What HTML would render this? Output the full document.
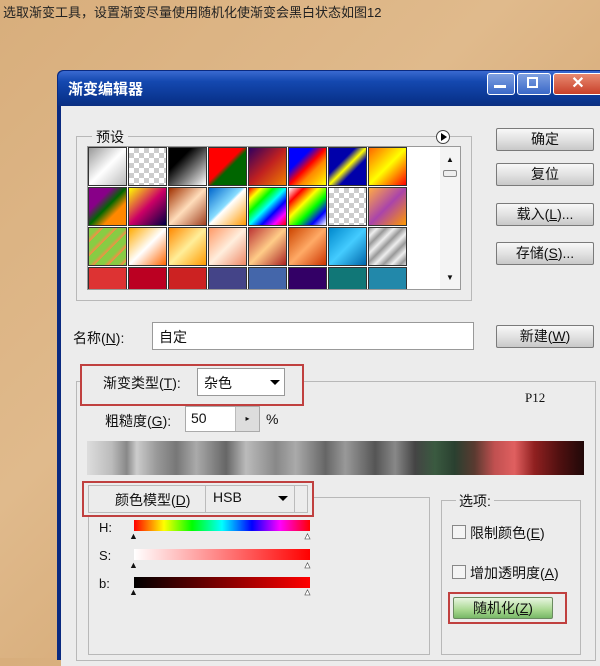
<!DOCTYPE html>
<html><head><meta charset="utf-8"><style>
*{margin:0;padding:0;box-sizing:border-box}
body{width:600px;height:658px;overflow:hidden;position:relative;background:linear-gradient(135deg,#d8ae7c,#e0ba8c 40%,#d4a874 70%,#dcb386);font-family:"Liberation Sans","Noto Sans CJK SC",sans-serif;font-size:13px;color:#111}
.a{position:absolute}
.btn{position:absolute;border:1px solid #7a7a7a;border-radius:2px;background:linear-gradient(#f8f8f8,#e2e2e2 50%,#c8c8c8);text-align:center;font-size:14px;line-height:20px}
.red{position:absolute;border:2px solid #c0403f}
.grp{position:absolute;border:1px solid #b8b8b8}
.sw{position:absolute;width:39px;height:39px;border:1px solid #333}
</style></head><body>
<div class="a" style="left:3px;top:2px;font-size:13px;color:#222">选取渐变工具，设置渐变尽量使用随机化使渐变会黑白状态如图12</div>
<!-- dialog -->
<div class="a" style="left:57px;top:70px;width:545px;height:590px;background:#0a2a80;border-radius:6px 0 0 0"></div>
<div class="a" style="left:58px;top:71px;width:542px;height:35px;background:linear-gradient(#3a6ad0,#1448b0 30%,#0a3590 80%,#0b2f80);border-radius:6px 0 0 0"></div>
<div class="a" style="left:68px;top:78px;color:#fff;font-weight:bold;font-size:15px">渐变编辑器</div>
<div class="a" style="left:487px;top:73px;width:28px;height:22px;background:linear-gradient(#7fa0e0,#3a68c8);border:1px solid #fff;border-radius:3px"></div>
<div class="a" style="left:494px;top:85px;width:12px;height:3px;background:#fff"></div>
<div class="a" style="left:517px;top:73px;width:34px;height:22px;background:linear-gradient(#7fa0e0,#3a68c8);border:1px solid #fff;border-radius:3px"></div>
<div class="a" style="left:527px;top:77px;width:11px;height:11px;border:2px solid #fff"></div>
<div class="a" style="left:553px;top:73px;width:50px;height:22px;background:linear-gradient(#e88a70,#c8402a);border:1px solid #fff;border-radius:3px;color:#fff;font-weight:bold;text-align:center;font-size:16px;line-height:20px">✕</div>
<div class="a" style="left:61px;top:106px;width:545px;height:560px;background:#ececec"></div>
<!-- presets -->
<div class="grp" style="left:76px;top:136px;width:396px;height:165px"></div>
<div class="a" style="left:92px;top:127px;background:#ececec;padding:0 4px;font-size:14px">预设</div>
<div class="a" style="left:436px;top:130px;width:14px;height:14px;border-radius:50%;border:1px solid #444;background:#fff"></div>
<div class="a" style="left:441px;top:133px;width:0;height:0;border-left:6px solid #000;border-top:4px solid transparent;border-bottom:4px solid transparent"></div>
<div class="a" style="left:87px;top:146px;width:374px;height:144px;background:#fff;border:1px solid #999;overflow:hidden">
<div class="sw" style="left:0;top:0;background:linear-gradient(135deg,#999,#fff 50%,#bbb)"></div>
<div class="sw" style="left:40px;top:0;background:repeating-conic-gradient(#ccc 0 25%,#fff 0 50%) 0 0/10px 10px"></div>
<div class="sw" style="left:80px;top:0;background:linear-gradient(135deg,#000 30%,#fff)"></div>
<div class="sw" style="left:120px;top:0;background:linear-gradient(135deg,#f00 45%,#060 55%)"></div>
<div class="sw" style="left:160px;top:0;background:linear-gradient(135deg,#300060,#c02020,#f08000)"></div>
<div class="sw" style="left:200px;top:0;background:linear-gradient(135deg,#00f 30%,#f00 50%,#f80 65%,#ff0)"></div>
<div class="sw" style="left:240px;top:0;background:linear-gradient(135deg,#00a 35%,#ff0 50%,#00a 65%)"></div>
<div class="sw" style="left:280px;top:0;background:linear-gradient(135deg,#f60,#ff0 50%,#f00)"></div>
<div class="sw" style="left:0;top:40px;background:linear-gradient(135deg,#808 30%,#060 50%,#f80 70%)"></div>
<div class="sw" style="left:40px;top:40px;background:linear-gradient(135deg,#ff0,#c06 50%,#004)"></div>
<div class="sw" style="left:80px;top:40px;background:linear-gradient(135deg,#a03000,#fdb 50%,#a04020)"></div>
<div class="sw" style="left:120px;top:40px;background:linear-gradient(135deg,#06c,#8df 45%,#fff 50%,#f90)"></div>
<div class="sw" style="left:160px;top:40px;background:linear-gradient(135deg,#f00,#ff0,#0f0,#0ff,#00f,#f0f,#f00)"></div>
<div class="sw" style="left:200px;top:40px;background:linear-gradient(135deg,#fff,#f00,#ff0,#0f0,#00f,#fff)"></div>
<div class="sw" style="left:240px;top:40px;background:repeating-conic-gradient(#ccc 0 25%,#fff 0 50%) 0 0/10px 10px"></div>
<div class="sw" style="left:280px;top:40px;background:linear-gradient(135deg,#fa4,#a4a 50%,#f90)"></div>
<div class="sw" style="left:0;top:80px;background:repeating-linear-gradient(135deg,#8c4,#8c4 6px,#f84 10px)"></div>
<div class="sw" style="left:40px;top:80px;background:linear-gradient(135deg,#fa0,#fff 50%,#f60)"></div>
<div class="sw" style="left:80px;top:80px;background:linear-gradient(135deg,#f80,#fe9 50%,#f90)"></div>
<div class="sw" style="left:120px;top:80px;background:linear-gradient(135deg,#f96,#fed 50%,#e86)"></div>
<div class="sw" style="left:160px;top:80px;background:linear-gradient(135deg,#b33,#fc8 50%,#a22)"></div>
<div class="sw" style="left:200px;top:80px;background:linear-gradient(135deg,#c40,#fa6 50%,#c30)"></div>
<div class="sw" style="left:240px;top:80px;background:linear-gradient(135deg,#08c,#4cf 50%,#06a)"></div>
<div class="sw" style="left:280px;top:80px;background:repeating-linear-gradient(135deg,#999,#eee 6px,#999 12px)"></div>
<div class="sw" style="left:0;top:120px;background:#d33"></div>
<div class="sw" style="left:40px;top:120px;background:#b02"></div>
<div class="sw" style="left:80px;top:120px;background:#c22"></div>
<div class="sw" style="left:120px;top:120px;background:#448"></div>
<div class="sw" style="left:160px;top:120px;background:#46a"></div>
<div class="sw" style="left:200px;top:120px;background:#306"></div>
<div class="sw" style="left:240px;top:120px;background:#177"></div>
<div class="sw" style="left:280px;top:120px;background:#28a"></div>
<div class="a" style="left:352px;top:0;width:20px;height:142px;background:#f4f4f4"></div>
<div class="a" style="left:358px;top:8px;font-size:8px">▲</div>
<div class="a" style="left:355px;top:23px;width:14px;height:7px;border:1px solid #888;border-radius:2px;background:#eee"></div>
<div class="a" style="left:358px;top:126px;font-size:8px">▼</div>
</div>
<!-- right buttons -->
<div class="btn" style="left:496px;top:128px;width:98px;height:23px">确定</div>
<div class="btn" style="left:496px;top:163px;width:98px;height:23px">复位</div>
<div class="btn" style="left:496px;top:203px;width:98px;height:23px">载入(<u>L</u>)...</div>
<div class="btn" style="left:496px;top:242px;width:98px;height:23px">存储(<u>S</u>)...</div>
<!-- name -->
<div class="a" style="left:73px;top:328px;font-size:14px">名称(<u>N</u>):</div>
<div class="a" style="left:152px;top:322px;width:322px;height:28px;background:#fff;border:1px solid #999;padding:4px 6px;font-size:14px">自定</div>
<div class="btn" style="left:496px;top:325px;width:98px;height:23px">新建(<u>W</u>)</div>
<!-- type group -->
<div class="grp" style="left:76px;top:381px;width:520px;height:280px"></div>
<div class="a" style="left:82px;top:365px;width:220px;height:40px;background:#ececec"></div>
<div class="red" style="left:80px;top:364px;width:224px;height:42px"></div>
<div class="a" style="left:103px;top:373px;font-size:14px">渐变类型(<u>T</u>):</div>
<div class="a" style="left:197px;top:368px;width:88px;height:28px;background:#fff;border:1px solid #999;padding:4px 6px;font-size:14px">杂色</div>
<div class="a" style="left:270px;top:380px;width:0;height:0;border-top:5px solid #000;border-left:5px solid transparent;border-right:5px solid transparent"></div>
<div class="a" style="left:525px;top:390px;font-family:'Liberation Serif',serif;font-size:13px">P12</div>
<div class="a" style="left:105px;top:411px;font-size:14px">粗糙度(<u>G</u>):</div>
<div class="a" style="left:185px;top:406px;width:75px;height:26px;background:#fff;border:1px solid #aaa;padding:3px 5px;font-size:14px">50</div>
<div class="a" style="left:235px;top:407px;width:24px;height:24px;background:#ddd;border-left:1px solid #bbb;font-size:8px;text-align:center;line-height:24px">▸</div>
<div class="a" style="left:266px;top:411px;font-size:14px">%</div>
<div class="a" style="left:87px;top:441px;width:497px;height:34px;background:linear-gradient(90deg,#ddd,#bbb 5%,#888 8%,#ccc 10%,#999 14%,#777 18%,#aaa 22%,#666 28%,#bbb 32%,#888 38%,#aaa 42%,#666 48%,#999 52%,#555 58%,#888 62%,#444 66%,#3a5a40 70%,#2a4030 74%,#5a3a30 78%,#c05050 82%,#e06060 86%,#902020 90%,#501010 95%,#200808)"></div>
<!-- color model -->
<div class="grp" style="left:88px;top:497px;width:342px;height:158px"></div>
<div class="a" style="left:84px;top:483px;width:228px;height:32px;background:#ececec"></div>
<div class="red" style="left:82px;top:481px;width:232px;height:36px"></div>
<div class="a" style="left:88px;top:485px;width:220px;height:28px;border:1px solid #bbb"></div>
<div class="a" style="left:115px;top:490px;font-size:14px">颜色模型(<u>D</u>)</div>
<div class="a" style="left:205px;top:485px;width:90px;height:28px;border-left:1px solid #bbb;border-right:1px solid #bbb;padding:4px 7px;font-size:14px">HSB</div>
<div class="a" style="left:278px;top:496px;width:0;height:0;border-top:5px solid #000;border-left:5px solid transparent;border-right:5px solid transparent"></div>
<div class="a" style="left:99px;top:520px;font-size:13px">H:</div>
<div class="a" style="left:99px;top:548px;font-size:13px">S:</div>
<div class="a" style="left:99px;top:576px;font-size:13px">b:</div>
<div class="a" style="left:134px;top:520px;width:176px;height:11px;background:linear-gradient(90deg,#f00,#ff0 17%,#0f0 33%,#0ff 50%,#00f 67%,#f0f 83%,#f00)"></div>
<div class="a" style="left:134px;top:549px;width:176px;height:11px;background:linear-gradient(90deg,#fff,#f00)"></div>
<div class="a" style="left:134px;top:577px;width:176px;height:11px;background:linear-gradient(90deg,#000,#f00)"></div>
<div class="a" style="left:129px;top:531px;font-size:9px">▲</div><div class="a" style="left:303px;top:531px;font-size:9px;color:#fff;-webkit-text-stroke:0.5px #333">▲</div>
<div class="a" style="left:129px;top:560px;font-size:9px">▲</div><div class="a" style="left:303px;top:560px;font-size:9px;color:#fff;-webkit-text-stroke:0.5px #333">▲</div>
<div class="a" style="left:129px;top:587px;font-size:9px">▲</div><div class="a" style="left:303px;top:587px;font-size:9px;color:#fff;-webkit-text-stroke:0.5px #333">▲</div>
<!-- options -->
<div class="grp" style="left:441px;top:500px;width:140px;height:155px"></div>
<div class="a" style="left:456px;top:491px;background:#ececec;padding:0 3px;font-size:14px">选项:</div>
<div class="a" style="left:452px;top:525px;width:14px;height:14px;border:1px solid #888;background:#f4f4f4"></div>
<div class="a" style="left:470px;top:523px;font-size:14px">限制颜色(<u>E</u>)</div>
<div class="a" style="left:452px;top:565px;width:14px;height:14px;border:1px solid #888;background:#f4f4f4"></div>
<div class="a" style="left:470px;top:563px;font-size:14px">增加透明度(<u>A</u>)</div>
<div class="red" style="left:448px;top:592px;width:119px;height:32px"></div>
<div class="btn" style="left:453px;top:597px;width:100px;height:22px;background:linear-gradient(#e8f5e0,#a8d890 60%,#78b868);border-color:#6a8a60">随机化(<u>Z</u>)</div>
</body></html>
